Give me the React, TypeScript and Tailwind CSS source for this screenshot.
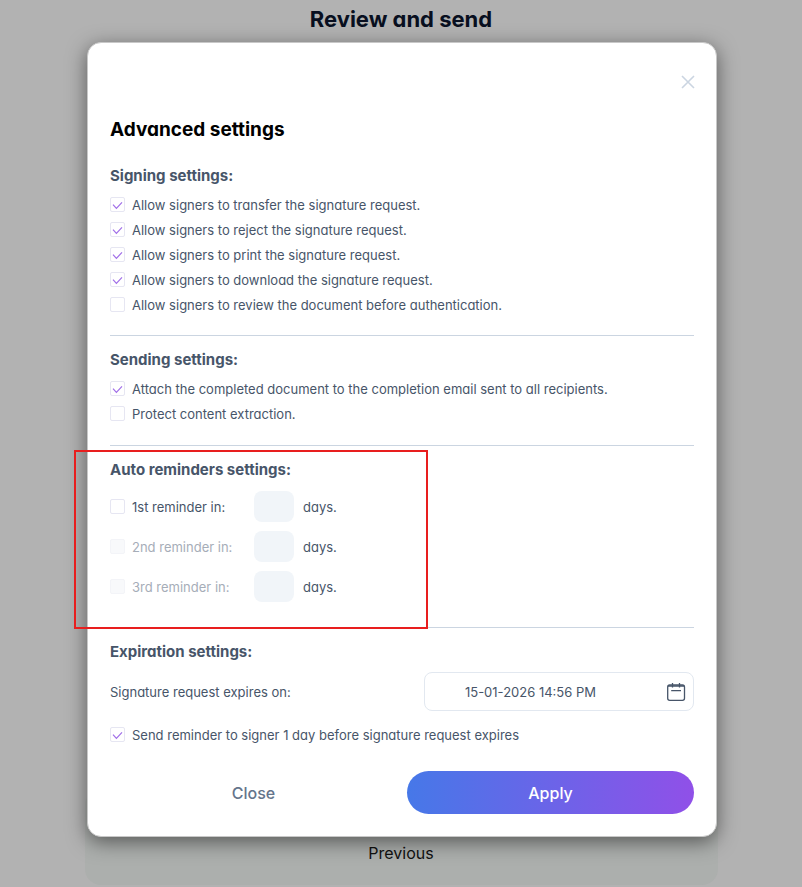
import React, { useState } from 'react';

interface CheckOptionProps {
  id: string;
  label: string;
  defaultChecked?: boolean;
  disabled?: boolean;
}

const CheckOption: React.FC<CheckOptionProps> = ({ id, label, defaultChecked = false, disabled = false }) => {
  const [checked, setChecked] = useState(defaultChecked);

  return (
    <div className="flex h-[25px] items-center gap-[7px]">
      <span className="grid h-[15px] w-[15px] shrink-0 place-items-center">
        <input
          id={id}
          type="checkbox"
          checked={checked}
          disabled={disabled}
          onChange={(e) => setChecked(e.target.checked)}
          className="col-start-1 row-start-1 h-[15px] w-[15px] appearance-none rounded-xs border border-[#e6e6f2] bg-white disabled:border-[#f3f4f8] disabled:bg-[#f8f9fb]"
        />
        {checked && (
          <svg className="pointer-events-none col-start-1 row-start-1 h-[15px] w-[15px]" viewBox="0 0 15 15" fill="none" stroke="#a06ee8" strokeWidth="1.2">
            <path d="M3 7.6L6.4 11.3L12 5.4" />
          </svg>
        )}
      </span>
      <label htmlFor={id} className={disabled ? 'whitespace-nowrap text-[#a6adb8]' : ''}>
        {label}
      </label>
    </div>
  );
};

const signingOptions = [
  { id: 'transfer', label: 'Allow signers to transfer the signature request.', on: true },
  { id: 'reject', label: 'Allow signers to reject the signature request.', on: true },
  { id: 'print', label: 'Allow signers to print the signature request.', on: true },
  { id: 'download', label: 'Allow signers to download the signature request.', on: true },
  { id: 'review', label: 'Allow signers to review the document before authentication.', on: false },
];

const sendingOptions = [
  { id: 'attach', label: 'Attach the completed document to the completion email sent to all recipients.', on: true },
  { id: 'protect', label: 'Protect content extraction.', on: false },
];

const reminders = [
  { id: 'first', label: '1st reminder in:', disabled: false },
  { id: 'second', label: '2nd reminder in:', disabled: true },
  { id: 'third', label: '3rd reminder in:', disabled: true },
];

const SectionTitle: React.FC<{ children: React.ReactNode }> = ({ children }) => (
  <h3 className="text-[15px] leading-6 font-bold">{children}</h3>
);

const AdvancedSettings: React.FC = () => {
  const [expiry, setExpiry] = useState('15-01-2026 14:56 PM');

  return (
    <div
      role="dialog"
      aria-labelledby="advanced-title"
      className="w-full max-w-[630px] rounded-[14px] border border-[#c8c8c8] bg-white px-[22px] pt-[29px] pb-[22px] text-[13px] leading-5 text-[#475569] shadow-[0_5px_20px_rgba(0,0,0,0.5)]"
    >
      <div className="flex justify-end">
        <button type="button" aria-label="Close dialog" className="-mr-1 h-5 w-5">
          <svg viewBox="0 0 20 20" className="h-5 w-5" fill="none" stroke="#cbd5e1" strokeWidth="1.6">
            <path d="M4 4L16 16M16 4L4 16" />
          </svg>
        </button>
      </div>

      <h2 id="advanced-title" className="mt-6 text-[19px] leading-7 font-bold text-black">Advanced settings</h2>

      <section className="mt-5 border-b border-[#cbd5e1] pb-[18px]">
        <SectionTitle>Signing settings:</SectionTitle>
        <div className="mt-1">
          {signingOptions.map((o) => (
            <CheckOption key={o.id} id={o.id} label={o.label} defaultChecked={o.on} />
          ))}
        </div>
      </section>

      <section className="border-b border-[#cbd5e1] pt-3 pb-[19px]">
        <SectionTitle>Sending settings:</SectionTitle>
        <div className="mt-1">
          {sendingOptions.map((o) => (
            <CheckOption key={o.id} id={o.id} label={o.label} defaultChecked={o.on} />
          ))}
        </div>
      </section>

      <section className="relative border-b border-[#cbd5e1] pt-3 pb-[25px]">
        {/* Highlight frame over the reminders */}
        <div className="pointer-events-none absolute top-1 -bottom-0.5 -left-9 w-[354px] border-2 border-[#e81e1e]" />
        <SectionTitle>Auto reminders settings:</SectionTitle>
        <div className="mt-[9px] flex flex-col gap-[9px]">
          {reminders.map((r) => (
            <div key={r.id} className="flex items-center">
              <div className="w-36">
                <CheckOption id={r.id} label={r.label} disabled={r.disabled} />
              </div>
              <input
                id={`${r.id}-days`}
                type="text"
                disabled
                className="h-[31px] w-10 rounded-lg bg-[#f1f5f9] text-center"
              />
              <label htmlFor={`${r.id}-days`} className="ml-[9px]">days.</label>
            </div>
          ))}
        </div>
      </section>

      <section className="pt-3">
        <SectionTitle>Expiration settings:</SectionTitle>
        <div className="mt-2 flex items-center justify-between">
          <label htmlFor="expiry">Signature request expires on:</label>
          <div className="flex h-[39px] w-[270px] items-center rounded-lg border border-[#e2e8f0] pr-[7px]">
            <input
              id="expiry"
              type="text"
              value={expiry}
              onChange={(e) => setExpiry(e.target.value)}
              className="h-full min-w-0 flex-1 pr-[30px] text-center outline-none"
            />
            <button type="button" aria-label="Pick a date" className="h-5 w-5">
              <svg viewBox="0 0 20 20" className="h-5 w-5" fill="none" stroke="#475569" strokeWidth="1.3">
                <rect x="1.7" y="3" width="16.8" height="15.3" rx="2" />
                <path d="M2 4H18M6.5 1V5.5M13.5 1V5.5M5.2 8.7H15" />
              </svg>
            </button>
          </div>
        </div>
        <div className="mt-[11px]">
          <CheckOption id="remind-before" label="Send reminder to signer 1 day before signature request expires" defaultChecked />
        </div>
      </section>

      <div className="mt-6 grid grid-cols-2 gap-[10px] text-[16px] font-medium">
        <button type="button" className="h-[43px] rounded-full text-[#64748b]">Close</button>
        <button type="button" className="h-[43px] rounded-full bg-linear-to-r/srgb from-[#4678e8] to-[#9050e8] text-white">Apply</button>
      </div>
    </div>
  );
};

const App: React.FC = () => (
  <div className="relative flex min-h-screen flex-col items-center bg-[#b2b2b2] font-[Inter,'Open_Sans',sans-serif] [font-feature-settings:'cv11']">
    <h1 className="text-[22px] leading-[38px] font-bold text-[#080f20]">Review and send</h1>
    <main className="flex w-full max-w-[633px] flex-1 flex-col justify-end pb-0.5">
      <div className="flex h-24 items-end justify-center rounded-2xl bg-[#acafad] pb-[22px]">
        <button type="button" className="text-[16px] leading-5 text-[#111]">Previous</button>
      </div>
    </main>

    <div className="absolute inset-0 flex items-start justify-center pt-[42px] pl-0.5">
      <AdvancedSettings />
    </div>
  </div>
);

export default App;
